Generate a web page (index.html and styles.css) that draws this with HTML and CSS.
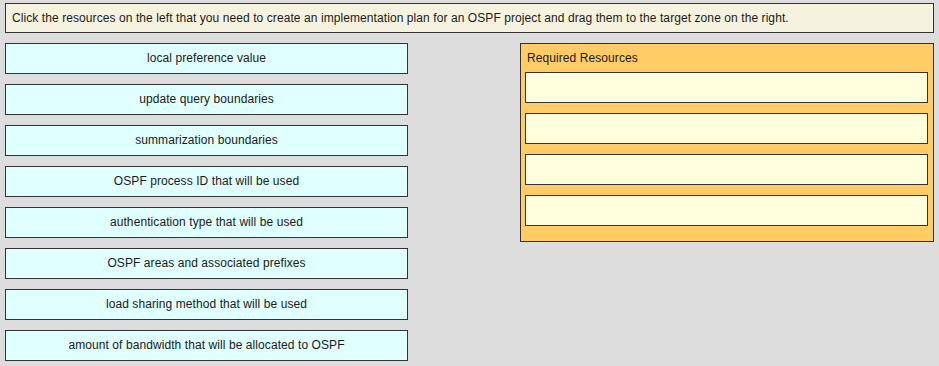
FILE: index.html
```html
<!DOCTYPE html>
<html lang="en">
<head>
    <meta charset="UTF-8">
    <title>OSPF Implementation Plan</title>
    <link rel="stylesheet" href="styles.css">
</head>
<body>
    <div class="page">
        <div class="instructions">Click the resources on the left that you need to create an implementation plan for an OSPF project and drag them to the target zone on the right.</div>

        <div class="workspace">
            <!-- Source items -->
            <div class="sources">
                <div class="item">local preference value</div>
                <div class="item">update query boundaries</div>
                <div class="item">summarization boundaries</div>
                <div class="item">OSPF process ID that will be used</div>
                <div class="item">authentication type that will be used</div>
                <div class="item">OSPF areas and associated prefixes</div>
                <div class="item">load sharing method that will be used</div>
                <div class="item">amount of bandwidth that will be allocated to OSPF</div>
            </div>

            <!-- Target zone -->
            <div class="target">
                <div class="target-title">Required Resources</div>
                <div class="slots">
                    <div class="slot"></div>
                    <div class="slot"></div>
                    <div class="slot"></div>
                    <div class="slot"></div>
                </div>
            </div>
        </div>
    </div>
</body>
</html>
```

FILE: styles.css
```css
* {
    margin: 0;
    padding: 0;
    box-sizing: border-box;
}

body {
    font-family: 'Liberation Sans', Arial, sans-serif;
    font-size: 12px;
    letter-spacing: 0.08px;
    background-color: #dddddd;
    color: #1a1a1a;
}

.page {
    width: 939px;
    padding: 3px 5px;
}

.instructions {
    width: 929px;
    height: 30px;
    line-height: 28px;
    padding-left: 6px;
    background-color: #f5f3df;
    border: 1px solid #333;
}

.workspace {
    display: flex;
    align-items: flex-start;
    gap: 112px;
    margin-top: 10px;
}

.sources {
    display: flex;
    flex-direction: column;
    gap: 10px;
    width: 403px;
}

.item {
    height: 31px;
    line-height: 29px;
    text-align: center;
    background-color: #e0ffff;
    border: 1px solid #333;
}

/* Target zone */
.target {
    width: 414px;
    padding: 0 5px 15px 4px;
    background-color: #ffcc66;
    border: 1px solid #333;
}

.target-title {
    height: 14px;
    line-height: 14px;
    margin: 7px 0 7px 2px;
}

.slots {
    display: flex;
    flex-direction: column;
    gap: 10px;
}

.slot {
    height: 31px;
    background-color: #ffffdd;
    border: 1px solid #333;
}
```
